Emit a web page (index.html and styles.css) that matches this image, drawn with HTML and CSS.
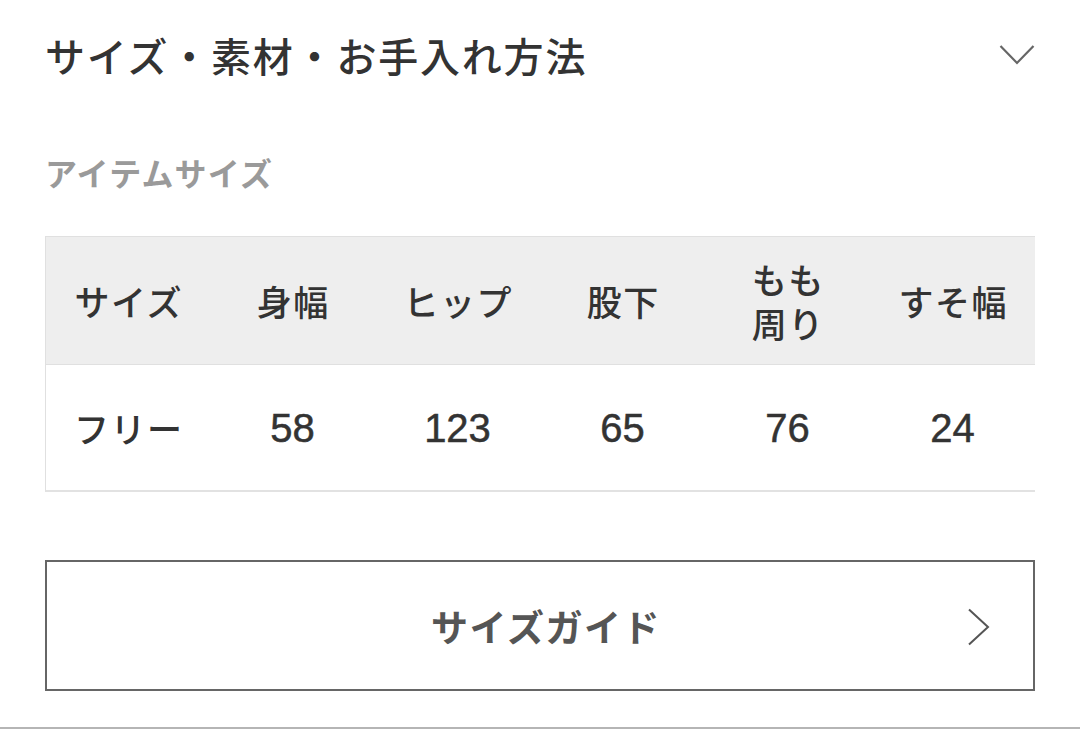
FILE: index.html
```html
<!DOCTYPE html>
<html lang="ja">
<head>
<meta charset="utf-8">
<link rel="stylesheet" href="styles.css">
</head>
<body>
<div class="page">
  <div class="acc-head">
    <h2 class="acc-title">サイズ・素材・お手入れ方法</h2>
    <svg class="chev-down" width="36" height="22" viewBox="0 0 36 22"><polyline points="1.5,2 18,19 34.5,2" fill="none" stroke="#666" stroke-width="2.2"/></svg>
  </div>
  <div class="label">アイテムサイズ</div>
  <div class="size-table">
    <div class="row head">
      <div class="cell">サイズ</div>
      <div class="cell">身幅</div>
      <div class="cell">ヒップ</div>
      <div class="cell">股下</div>
      <div class="cell two"><span class="ln">もも</span><span class="ln">周り</span></div>
      <div class="cell">すそ幅</div>
    </div>
    <div class="row body">
      <div class="cell">フリー</div>
      <div class="cell num">58</div>
      <div class="cell num">123</div>
      <div class="cell num">65</div>
      <div class="cell num">76</div>
      <div class="cell num">24</div>
    </div>
  </div>
  <a class="guide-btn">
    <span class="guide-text">サイズガイド</span>
    <svg class="chev-right" width="24" height="38" viewBox="0 0 24 38"><polyline points="2,1.5 21,19 2,36.5" fill="none" stroke="#555" stroke-width="2"/></svg>
  </a>
</div>
<div class="footer-line"></div>
</body>
</html>
```

FILE: styles.css
```css
html, body {
  margin: 0;
  padding: 0;
  background: #fff;
}
body {
  width: 1080px;
  height: 729px;
  overflow: hidden;
  font-family: "Liberation Sans", "Noto Sans CJK JP", sans-serif;
  color: #333;
}
.page {
  padding: 0 45px;
  height: 727px;
  box-sizing: border-box;
}
.acc-head {
  height: 112px;
  display: flex;
  align-items: center;
  justify-content: space-between;
}
.acc-title {
  margin: 0;
  margin-top: -3px;
  font-family: "Noto Sans CJK JP", sans-serif;
  font-size: 40px;
  font-weight: 500;
  letter-spacing: 1.8px;
  color: #333;
  line-height: 56px;
}
.chev-down {
  display: block;
  margin-top: -3px;
}
.label {
  margin-top: 40px;
  height: 40px;
  line-height: 40px;
  font-family: "Noto Sans CJK JP", sans-serif;
  font-size: 32px;
  font-weight: 700;
  letter-spacing: 1.2px;
  color: #9a9a9a;
}
.size-table {
  margin-top: 44px;
  width: 990px;
  border-top: 1px solid #e0e0e0;
  border-left: 1px solid #e0e0e0;
  border-bottom: 2px solid #e2e2e2;
  box-sizing: border-box;
}
.row {
  display: grid;
  grid-template-columns: 164px repeat(5, 165px);
}
.row.head {
  height: 127px;
  background: #eeeeee;
  border-bottom: 1px solid #e0e0e0;
}
.row.body {
  height: 125px;
  background: #fff;
}
.cell {
  display: flex;
  align-items: center;
  justify-content: center;
  text-align: center;
  font-family: "Noto Sans CJK JP", sans-serif;
  font-size: 35px;
  font-weight: 500;
  letter-spacing: 1.5px;
  text-indent: 1.5px;
  line-height: 44px;
  color: #333;
}
.cell.two {
  flex-direction: column;
}
.cell.two .ln {
  display: block;
  height: 44px;
  line-height: 44px;
}
.cell.num {
  font-family: "Liberation Sans", "Noto Sans CJK JP", sans-serif;
  font-size: 40px;
  font-weight: 400;
  letter-spacing: 0;
  text-indent: 0;
  -webkit-text-stroke: 0.5px #333;
}
.guide-btn {
  margin-top: 68px;
  height: 131px;
  border: 2px solid #666;
  box-sizing: border-box;
  display: flex;
  align-items: center;
  justify-content: center;
  position: relative;
}
.guide-text {
  margin-left: 12px;
  font-family: "Noto Sans CJK JP", sans-serif;
  font-size: 37px;
  font-weight: 700;
  color: #555;
  letter-spacing: 1.5px;
}
.chev-right {
  position: absolute;
  right: 42px;
  top: 46px;
}
.footer-line {
  height: 2px;
  background: #b5b5b5;
}
```
